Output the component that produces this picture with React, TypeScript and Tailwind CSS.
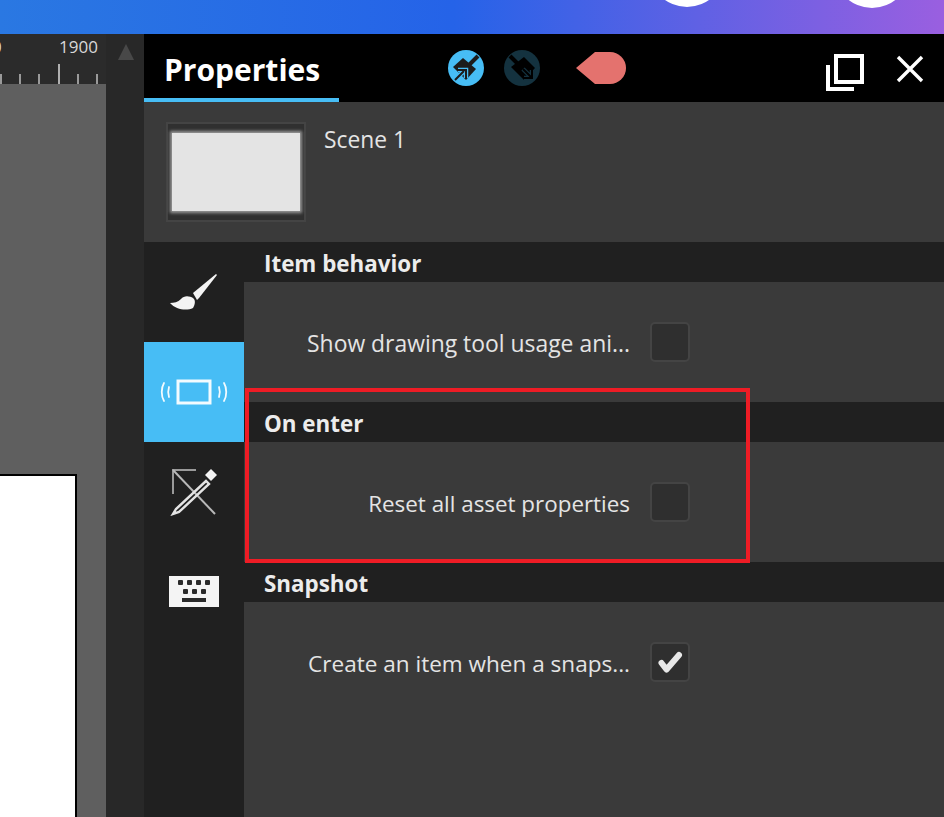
const font = { fontFamily: '"Open Sans", "Noto Sans", sans-serif' };

function SweepIcon({ variant }: { variant: 'out' | 'in' }) {
  const on = variant === 'out';
  return (
    <svg width="36" height="36" viewBox="0 0 36 36">
      <circle cx="18" cy="18" r="18" fill={on ? '#47bdf5' : '#14323f'} />
      {on ? (
        <g>
          <path d="M21 15l9-9" stroke="#1c1c1c" strokeWidth="4" />
          <path d="M15 8l13 11-10 11L5 17z" fill="#1c1c1c" />
          <path d="M7 30l9-9M10 20h8v8" stroke="#47bdf5" strokeWidth="4.500" fill="none" />
          <path d="M7 30l9-9M10 20h8v8" stroke="#1c1c1c" strokeWidth="2" fill="none" />
        </g>
      ) : (
        <g>
          <path d="M6 6l8 8" stroke="#000" strokeWidth="4" />
          <path d="M20 7l11 11-11 12L7 17z" fill="#000" />
          <path d="M19 19l9 9M28 20v8h-8" stroke="#14323f" strokeWidth="4.500" fill="none" />
          <path d="M19 19l9 9M28 20v8h-8" stroke="#000" strokeWidth="2" fill="none" />
        </g>
      )}
    </svg>
  );
}

function Section({ title, label, labelClass, checked, grow }: { title: string; label: string; labelClass: string; checked?: boolean; grow?: boolean }) {
  return (
    <div className={grow ? 'flex flex-1 flex-col' : 'flex flex-col'}>
      <div className="flex h-10 items-center bg-[#202020] pl-5 pt-[5px] text-[22.4px] font-bold leading-none text-[#ececec]">{title}</div>
      <div className="flex h-[120px] items-center">
        <div className="flex h-10 items-center">
          <span className={'w-[386px] pt-[4px] text-right leading-none text-[#e4e4e4] ' + labelClass}>{label}</span>
          <span className="ml-5 flex h-10 w-10 items-center justify-center rounded-[5px] border-2 border-[#444444] bg-[#2f2f2f]">
            {checked && (
              <svg width="26" height="24" viewBox="0 0 26 24">
                <path d="M4.500 13l5 6.500L22 5" stroke="#e8e8e8" strokeWidth="6" fill="none" strokeLinecap="round" strokeLinejoin="round" />
              </svg>
            )}
          </span>
        </div>
      </div>
    </div>
  );
}

export default function App() {
  return (
    <div className="relative flex h-[817px] w-[944px] flex-col overflow-hidden bg-[#3a3a3a]" style={font}>
      {/* top bar */}
      <div className="relative h-[34px] shrink-0 overflow-hidden bg-[linear-gradient(90deg,#2a78e2_0%,#2563e8_48%,#9a5fe0_100%)]">
        <div className="absolute bottom-[27px] left-[649px] h-[76px] w-[76px] rounded-full bg-white" />
        <div className="absolute bottom-[26px] left-[834px] h-[76px] w-[76px] rounded-full bg-white" />
      </div>

      <div className="flex min-h-0 flex-1">
        {/* canvas */}
        <div className="flex w-[106px] shrink-0 flex-col overflow-hidden bg-[#5f5f5f]">
          <div className="relative h-[50px] shrink-0 bg-[#2b2b2b]">
            <span className="absolute right-[8px] top-[2px] text-[17px] leading-[22px] text-[#d8d8d8]">1900</span>
            <span className="absolute left-0 top-[2px] text-[17px] leading-[22px] text-[#d8d8d8]">
              <span className="relative -left-2">0</span>
            </span>
            <div className="absolute bottom-0 left-0 flex h-[20px] w-full items-end">
              <span className="h-[10px] w-[2px] bg-[#9a9a9a]" />
              <span className="ml-[17px] h-[10px] w-[2px] bg-[#9a9a9a]" />
              <span className="ml-[17px] h-[10px] w-[2px] bg-[#9a9a9a]" />
              <span className="ml-[18px] h-[20px] w-[2px] bg-[#b0b0b0]" />
              <span className="ml-[17px] h-[10px] w-[2px] bg-[#9a9a9a]" />
              <span className="ml-[17px] h-[10px] w-[2px] bg-[#9a9a9a]" />
            </div>
          </div>
          <div className="min-h-0 flex-1 pt-[390px]">
            <div className="h-[343px] w-[77px] border-r-2 border-t-2 border-black bg-white" />
          </div>
        </div>

        {/* scroll track */}
        <div className="flex w-[38px] shrink-0 justify-center bg-[#282828] pl-[2px] pt-[10px]">
          <div className="h-0 w-0 border-x-[8px] border-b-[16px] border-x-transparent border-b-[#484848]" />
        </div>

        {/* properties panel */}
        <div className="flex min-w-0 flex-1 flex-col">
          <div className="flex h-[68px] shrink-0 bg-black">
            <div className="flex h-[68px] w-[195px] items-start border-b-4 border-[#47bdf5] pl-5 pt-[16px] text-[30px] font-bold leading-[40px] text-white">
              Properties
            </div>
            <div className="ml-[109px] mt-4 flex gap-5">
              <SweepIcon variant="out" />
              <SweepIcon variant="in" />
            </div>
            <svg className="ml-[35px] mt-[17px]" width="52" height="34" viewBox="0 0 52 34">
              <path d="M1 17L20 1h15a16 16 0 0 1 0 32H20z" fill="#e4726e" />
            </svg>
            <svg className="ml-[199px] mt-[19px]" width="38" height="38" viewBox="0 0 38 38">
              <path d="M10 3h26v26H10z" stroke="#fff" strokeWidth="4" fill="none" />
              <path d="M2 12v24h26" stroke="#fff" strokeWidth="4" fill="none" />
            </svg>
            <svg className="ml-[31px] mt-[20px]" width="30" height="30" viewBox="0 0 30 30">
              <path d="M3 3l24 24M27 3L3 27" stroke="#fff" strokeWidth="3.400" fill="none" />
            </svg>
          </div>

          <div className="flex h-[140px] shrink-0 bg-[#3a3a3a] pl-[22px] pt-5">
            <div className="flex h-[100px] w-[140px] items-center justify-center border-2 border-[#444444] bg-[#303030]">
              <div className="h-[78px] w-[128px] bg-[#e4e4e4] shadow-[0_0_3px_2px_#9a9a9a]" />
            </div>
            <div className="ml-[18px] text-[22.800px] leading-[36px] text-[#e4e4e4]">Scene 1</div>
          </div>

          <div className="flex min-h-0 flex-1">
            <div className="flex w-[100px] shrink-0 flex-col bg-[#202020]">
              <div className="flex h-[100px] items-center justify-center">
                <svg width="50" height="40" viewBox="0 0 50 40">
                  <path d="M24 21L47 2l1 1-18 23-2 2z" fill="#f4f4f4" />
                  <path d="M1 31c4 0 8-1 11-4 3-4 9-3 12-1 3 2 2 7 0 10-6 3-17 2-23-5z" fill="#f4f4f4" />
                </svg>
              </div>
              <div className="flex h-[100px] items-center justify-center bg-[#47bdf5]">
                <svg width="68" height="26" viewBox="0 0 68 26" fill="none" stroke="#f2fbff">
                  <rect x="18" y="2" width="32" height="22" strokeWidth="3" />
                  <path d="M4 4c-3 5-3 13 0 18M9 8c-1 3-1 7 0 10M64 4c3 5 3 13 0 18M59 8c1 3 1 7 0 10" strokeWidth="1.800" strokeLinecap="round" />
                </svg>
              </div>
              <div className="flex h-[100px] items-center justify-center">
                <svg width="48" height="48" viewBox="0 0 48 48" fill="none">
                  <path d="M26 2H3v24" stroke="#9a9a9a" strokeWidth="2" />
                  <path d="M3 2l42 44" stroke="#b8b8b8" strokeWidth="2" />
                  <path d="M36 13L6 41l-3 5 6-2 30-28z" stroke="#e4e4e4" strokeWidth="2.400" />
                  <path d="M41 1l6 6-6 6-6-6z" fill="#f4f4f4" />
                </svg>
              </div>
              <div className="flex h-[100px] items-center justify-center">
                <svg width="50" height="32" viewBox="0 0 50 32">
                  <rect width="50" height="31" fill="#f4f4f4" />
                  <g fill="#2a2a2a">
                    <rect x="9" y="4" width="5" height="5" rx="1" />
                    <rect x="18" y="4" width="5" height="5" rx="1" />
                    <rect x="27" y="4" width="5" height="5" rx="1" />
                    <rect x="36" y="4" width="5" height="5" rx="1" />
                    <rect x="14" y="13" width="5" height="5" rx="1" />
                    <rect x="23" y="13" width="5" height="5" rx="1" />
                    <rect x="32" y="13" width="5" height="5" rx="1" />
                    <rect x="13" y="22" width="24" height="4" />
                  </g>
                </svg>
              </div>
            </div>
            <div className="flex min-w-0 flex-1 flex-col">
              <Section title="Item behavior" label="Show drawing tool usage ani..." labelClass="text-[22.900px]" />
              <Section title="On enter" label="Reset all asset properties" labelClass="text-[22.400px]" />
              <Section title="Snapshot" label="Create an item when a snaps..." labelClass="text-[22.550px]" checked grow />
            </div>
          </div>
        </div>
      </div>

      {/* annotation */}
      <div className="absolute left-[245px] top-[388px] h-[175px] w-[505px] border-4 border-[#ee1c25]" />
    </div>
  );
}
